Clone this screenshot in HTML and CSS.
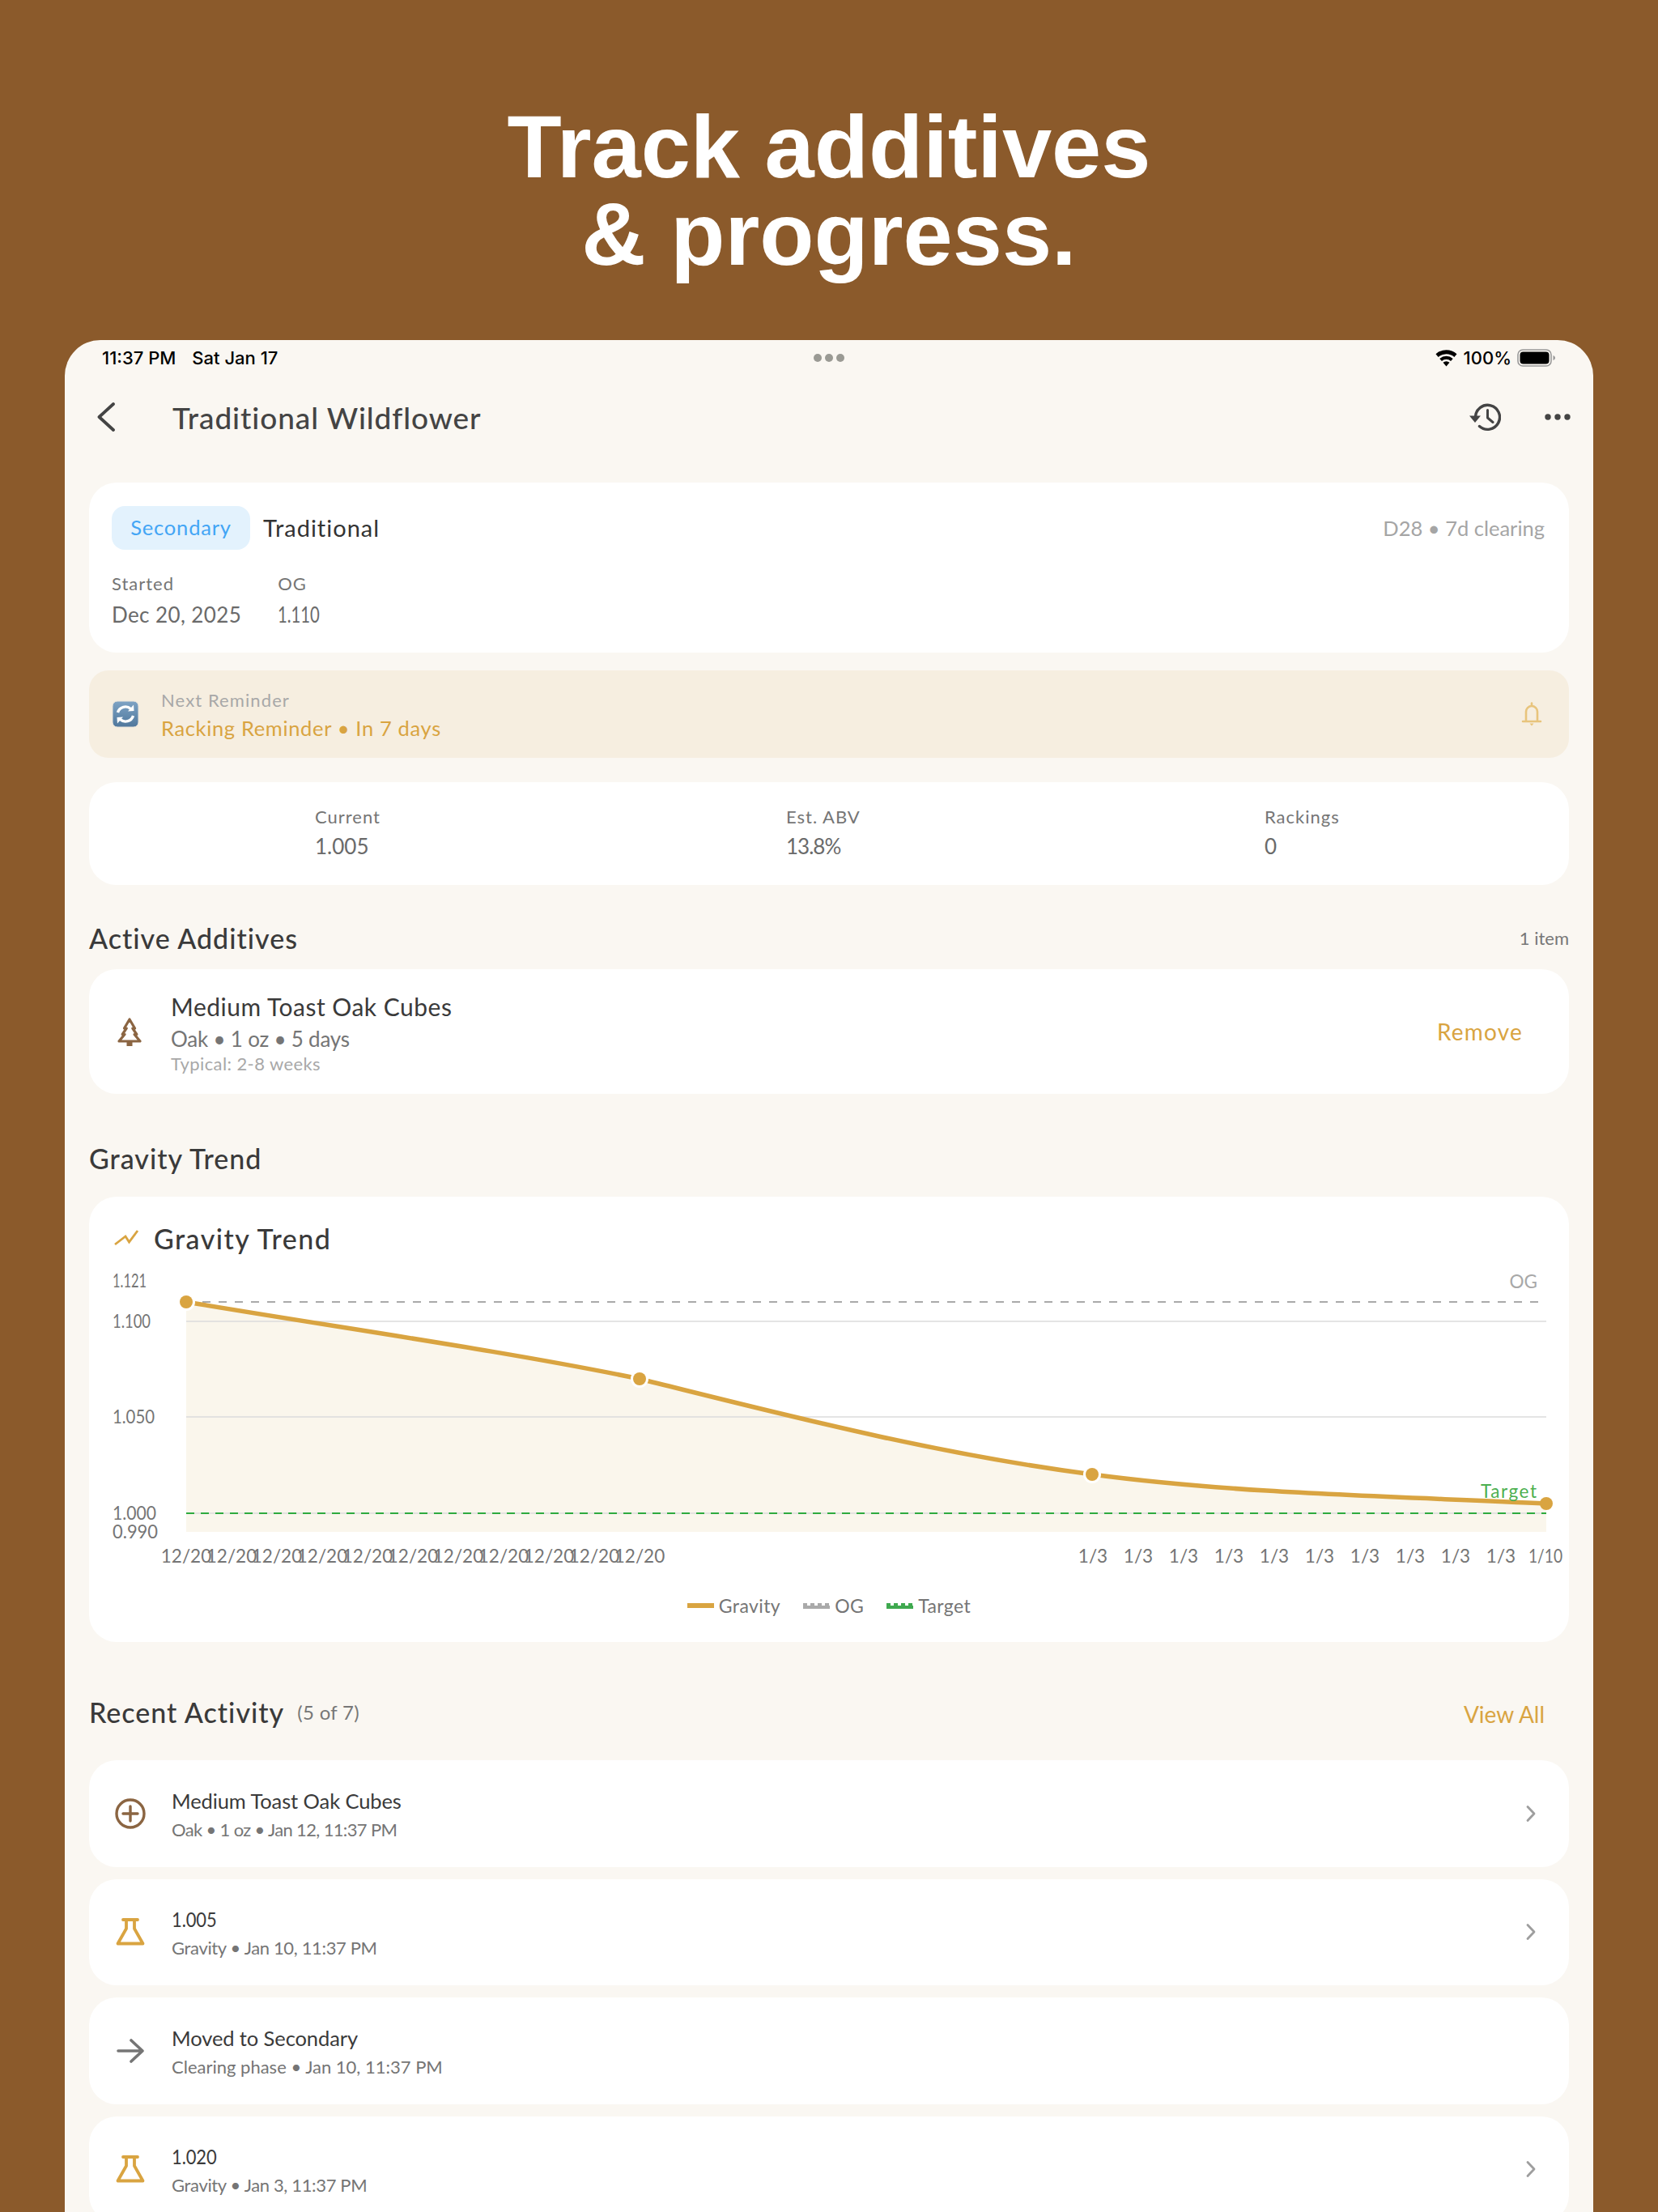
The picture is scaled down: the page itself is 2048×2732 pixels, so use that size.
FILE: index.html
```html
<!DOCTYPE html>
<html lang="en">
<head>
<meta charset="utf-8">
<title>Track additives &amp; progress</title>
<link rel="stylesheet" href="styles.css">
</head>
<body>
<h1 class="headline">Track additives<br>&amp; progress.</h1>
<main class="tablet">
  <div class="status">
    <div class="status-left"><span>11:37 PM</span><span>Sat Jan 17</span></div>
    <div class="status-dots"><i></i><i></i><i></i></div>
    <div class="status-right">
      <svg class="wifi" viewBox="0 0 26 20" width="29" height="21"><path d="M13 19.500l-3.800-4.400a5.600 5.600 0 0 1 7.600 0z"/><path d="M7.700 13.300l-2.500-2.900a11.800 11.800 0 0 1 15.600 0l-2.500 2.900a8 8 0 0 0-10.600 0z"/><path d="M3.600 8.500L.6 5a18.600 18.600 0 0 1 24.800 0l-3 3.500a14.200 14.200 0 0 0-18.800 0z"/></svg>
      <span>100%</span>
      <svg viewBox="0 0 48 22" width="48" height="22"><rect x="1" y="1" width="41" height="20" rx="6" fill="none" stroke="#999" stroke-width="1.600"/><rect x="3.500" y="3.500" width="36" height="15" rx="4" fill="#000"/><path d="M44.500 8v6c1.500-.6 2.500-1.700 2.500-3s-1-2.400-2.500-3z" fill="#999"/></svg>
    </div>
  </div>

  <header class="nav">
    <svg class="back" viewBox="0 0 24 36" width="24" height="36"><path d="M21 2L3.500 18 21 34" fill="none" stroke="#444" stroke-width="3.800" stroke-linecap="round" stroke-linejoin="round"/></svg>
    <div class="nav-title">Traditional Wildflower</div>
    <svg class="history" viewBox="0 0 40 36" width="40" height="36"><path d="M8.500 18a15 15 0 1 1 5 11.500" fill="none" stroke="#444" stroke-width="3.400" stroke-linecap="round"/><path d="M1 16.500h14l-7 8.500z" fill="#444"/><path d="M23.500 9.500V19l6.500 5.500" fill="none" stroke="#444" stroke-width="3" stroke-linecap="round" stroke-linejoin="round"/></svg>
    <svg class="more" viewBox="0 0 32 8" width="32" height="8"><circle cx="4" cy="4" r="3.700"/><circle cx="16" cy="4" r="3.700"/><circle cx="28" cy="4" r="3.700"/></svg>
  </header>

  <div class="content">
    <section class="card summary">
      <div class="summary-top">
        <span class="pill">Secondary</span>
        <span class="type">Traditional</span>
        <span class="age">D28 • 7d clearing</span>
      </div>
      <div class="facts">
        <div><div class="label">Started</div><div class="value date">Dec 20, 2025</div></div>
        <div><div class="label">OG</div><div class="value num-og">1.110</div></div>
      </div>
    </section>

    <section class="reminder">
      <svg class="emoji" viewBox="0 0 34 34" width="34" height="34">
        <defs><linearGradient id="blue" x1="0" y1="0" x2="0" y2="1"><stop offset="0" stop-color="#7ea3c4"/><stop offset="1" stop-color="#4f779c"/></linearGradient></defs>
        <rect x="1" y="1" width="32" height="32" rx="6" fill="url(#blue)" stroke="#e8e4dc"/>
        <path d="M7.500 15a9.800 9.800 0 0 1 16-4.500" fill="none" stroke="#fff" stroke-width="3.400"/>
        <path d="M20 13.500l7.500-.5-.5-7.500z" fill="#fff"/>
        <path d="M26.500 19a9.800 9.800 0 0 1-16 4.500" fill="none" stroke="#fff" stroke-width="3.400"/>
        <path d="M14 20.500l-7.500.5.500 7.500z" fill="#fff"/>
      </svg>
      <div class="reminder-text">
        <div class="reminder-label">Next Reminder</div>
        <div class="reminder-value">Racking Reminder • In 7 days</div>
      </div>
      <svg class="bell" viewBox="0 0 26 30" width="26" height="30"><path d="M13 1.500v3M6 23V12a7 7 0 0 1 14 0v11M2 24h22" fill="none" stroke="#e8c47c" stroke-width="2.600" stroke-linecap="round"/><path d="M10.500 26.500h5l-2.500 3z" fill="#e8c47c"/></svg>
    </section>

    <section class="card stats">
      <div><div class="label">Current</div><div class="value">1.005</div></div>
      <div><div class="label">Est. ABV</div><div class="value num-abv">13.8%</div></div>
      <div><div class="label">Rackings</div><div class="value">0</div></div>
    </section>

    <div class="section-head additives-head">
      <h2>Active Additives</h2>
      <span class="count">1 item</span>
    </div>
    <section class="card additive">
      <svg class="tree" viewBox="0 0 34 36" width="34" height="36"><path d="M17 3l6.500 11h-2.700l5 7.500h-2.800L30 30H4l7-8.500H8.200l5-7.500h-2.700z" fill="none" stroke="#8b6542" stroke-width="3.200" stroke-linejoin="round"/><rect x="13.500" y="29" width="7" height="7" fill="#8b6542"/></svg>
      <div class="additive-text">
        <div class="additive-name">Medium Toast Oak Cubes</div>
        <div class="additive-meta">Oak • 1 oz • 5 days</div>
        <div class="additive-note">Typical: 2-8 weeks</div>
      </div>
      <span class="remove">Remove</span>
    </section>

    <h2 class="trend-head">Gravity Trend</h2>
    <section class="card chart-card">
      <div class="chart-title">
        <svg viewBox="0 0 32 20" width="32" height="20"><path d="M2 18L15 8l4.500 7L30 1" fill="none" stroke="#d9a441" stroke-width="2.800"/></svg>
        <span>Gravity Trend</span>
      </div>
      <svg class="chart" viewBox="110 1560 1828 400" width="1828" height="400">
        <path class="area" d="M230 1608C420 1640 620 1668 790 1703C960 1745 1150 1795 1349 1821C1530 1845 1720 1848 1910 1857V1892H230Z"/>
        <path class="grid" d="M230 1632H1910M230 1750H1910M230 1869H1910"/>
        <path class="og" d="M230 1608H1910"/>
        <path class="tgt" d="M230 1869H1910"/>
        <path class="line" d="M230 1608C420 1640 620 1668 790 1703C960 1745 1150 1795 1349 1821C1530 1845 1720 1848 1910 1857"/>
        <circle class="halo" cx="230" cy="1608" r="11"/><circle class="halo" cx="790" cy="1703" r="11"/><circle class="halo" cx="1349" cy="1821" r="11"/>
        <circle class="pt" cx="230" cy="1608" r="8"/><circle class="pt" cx="790" cy="1703" r="8"/><circle class="pt" cx="1349" cy="1821" r="8"/><circle class="pt" cx="1910" cy="1857" r="8"/>
        <g class="ylab">
          <text x="139" y="1590" textLength="42" lengthAdjust="spacingAndGlyphs">1.121</text><text x="139" y="1640" textLength="47" lengthAdjust="spacingAndGlyphs">1.100</text><text x="139" y="1758" textLength="52" lengthAdjust="spacingAndGlyphs">1.050</text><text x="139" y="1877" textLength="54" lengthAdjust="spacingAndGlyphs">1.000</text><text x="139" y="1900" textLength="56" lengthAdjust="spacingAndGlyphs">0.990</text>
        </g>
        <text class="og-lab" x="1899" y="1591">OG</text>
        <text class="tgt-lab" x="1829" y="1850" textLength="69">Target</text>
        <g class="xlab">
          <text x="230" y="1930">12/20</text><text x="286" y="1930">12/20</text><text x="342" y="1930">12/20</text><text x="398" y="1930">12/20</text><text x="454" y="1930">12/20</text><text x="510" y="1930">12/20</text><text x="566" y="1930">12/20</text><text x="622" y="1930">12/20</text><text x="678" y="1930">12/20</text><text x="734" y="1930">12/20</text><text x="790" y="1930">12/20</text>
          <text x="1350" y="1930">1/3</text><text x="1406" y="1930">1/3</text><text x="1462" y="1930">1/3</text><text x="1518" y="1930">1/3</text><text x="1574" y="1930">1/3</text><text x="1630" y="1930">1/3</text><text x="1686" y="1930">1/3</text><text x="1742" y="1930">1/3</text><text x="1798" y="1930">1/3</text><text x="1854" y="1930">1/3</text>
        </g>
        <text class="xlab-last" x="1888" y="1930" textLength="42" lengthAdjust="spacingAndGlyphs">1/10</text>
      </svg>
      <div class="legend">
        <div class="legend-item"><i class="sw sw-g"></i>Gravity</div>
        <div class="legend-item"><i class="sw sw-o"></i>OG</div>
        <div class="legend-item"><i class="sw sw-t"></i>Target</div>
      </div>
    </section>

    <div class="section-head activity-head">
      <div class="activity-title"><h2>Recent Activity</h2><span class="count-lg">(5 of 7)</span></div>
      <span class="view-all">View All</span>
    </div>

    <div class="rows">
      <article class="row">
        <svg class="row-icon" viewBox="0 0 40 40" width="40" height="40"><circle cx="20" cy="20" r="17" fill="none" stroke="#8b6542" stroke-width="3.400"/><path d="M20 11v18M11 20h18" stroke="#8b6542" stroke-width="3.400" stroke-linecap="round"/></svg>
        <div class="row-text"><div class="row-title">Medium Toast Oak Cubes</div><div class="row-sub tight-lg">Oak • 1 oz • Jan 12, 11:37 PM</div></div>
        <svg class="chev" viewBox="0 0 14 24" width="14" height="24"><path d="M3 3.500l8 8.500-8 8.500" fill="none" stroke="#9e9e9e" stroke-width="2.800" stroke-linecap="round" stroke-linejoin="round"/></svg>
      </article>
      <article class="row">
        <svg class="row-icon" viewBox="0 0 40 40" width="40" height="40"><path d="M11 5h18M15 5v11L4.500 34.500h31L25 16V5" fill="none" stroke="#d9a441" stroke-width="3.800" stroke-linejoin="round" stroke-linecap="round"/></svg>
        <div class="row-text"><div class="row-title num-row">1.005</div><div class="row-sub tight-sm">Gravity • Jan 10, 11:37 PM</div></div>
        <svg class="chev" viewBox="0 0 14 24" width="14" height="24"><path d="M3 3.500l8 8.500-8 8.500" fill="none" stroke="#9e9e9e" stroke-width="2.800" stroke-linecap="round" stroke-linejoin="round"/></svg>
      </article>
      <article class="row">
        <svg class="row-icon" viewBox="0 0 40 40" width="40" height="40"><path d="M5 20h29M21 7l14 13-14 13" fill="none" stroke="#757575" stroke-width="3.600" stroke-linecap="round" stroke-linejoin="round"/></svg>
        <div class="row-text"><div class="row-title">Moved to Secondary</div><div class="row-sub">Clearing phase • Jan 10, 11:37 PM</div></div>
      </article>
      <article class="row">
        <svg class="row-icon" viewBox="0 0 40 40" width="40" height="40"><path d="M11 5h18M15 5v11L4.500 34.500h31L25 16V5" fill="none" stroke="#d9a441" stroke-width="3.800" stroke-linejoin="round" stroke-linecap="round"/></svg>
        <div class="row-text"><div class="row-title num-row">1.020</div><div class="row-sub tight-sm">Gravity • Jan 3, 11:37 PM</div></div>
        <svg class="chev" viewBox="0 0 14 24" width="14" height="24"><path d="M3 3.500l8 8.500-8 8.500" fill="none" stroke="#9e9e9e" stroke-width="2.800" stroke-linecap="round" stroke-linejoin="round"/></svg>
      </article>
    </div>
  </div>
</main>
</body>
</html>
```
FILE: styles.css
```css
* { box-sizing: border-box; }
html, body { margin: 0; padding: 0; }
body {
  width: 2048px; height: 2732px; overflow: hidden;
  background: #8b5a2b;
  font-family: "Lato", "Noto Sans", sans-serif;
  color: #333;
}
.headline {
  margin: 0; padding-top: 127px; height: 420px;
  font: 700 110px/108px "Liberation Sans", Arial, sans-serif;
  color: #fff; text-align: center;
}
.tablet {
  margin: 0 80px; height: 2312px; overflow: hidden;
  background: #faf7f2; border-radius: 44px 44px 0 0;
}
.status {
  height: 44px; padding: 0 46px; display: flex; align-items: center; justify-content: space-between;
  font: 500 22px/44px "Inter", sans-serif; color: #000;
}
.status-left { display: flex; gap: 20px; width: 360px; }
.status-dots { display: flex; gap: 4px; }
.status-dots i { width: 10px; height: 10px; border-radius: 50%; background: #9a9a94; }
.status-right { width: 360px; display: flex; gap: 7px; align-items: center; justify-content: flex-end; }
.nav { height: 104px; padding: 0 28px 2px 39px; display: flex; align-items: center; }
.nav-title { margin-left: 70px; flex: 1; font-size: 37px; font-weight: 500; color: #444; letter-spacing: .9px; }
.more { fill: #444; margin-left: 54px; }
.content { padding: 28px 30px 0; }
.card { background: #fff; border-radius: 34px; }
.summary { height: 210px; padding: 29px 30px 0 28px; }
.summary-top { display: flex; align-items: center; height: 54px; }
.pill {
  width: 171px; height: 54px; padding-bottom: 2px; border-radius: 16px; background: #e3f2fd; color: #42a5f5;
  display: flex; align-items: center; justify-content: center; font-size: 25.500px; letter-spacing: .8px;
}
.type { margin: 0 0 2px 16px; font-size: 29px; color: #333; letter-spacing: 1px; }
.age { margin: 0 0 1px auto; font-size: 25.500px; color: #a5a5a5; }
.facts { display: flex; gap: 45px; margin-top: 28px; }
.label { font-size: 22px; line-height: 28px; color: #757575; letter-spacing: 1px; }
.value { font-size: 26px; line-height: 32px; margin-top: 8px; color: #6a6a6a; }
.date { letter-spacing: .4px; }
.num-og { transform: scaleX(.78); transform-origin: left center; }
.num-abv { letter-spacing: -1px; }
.reminder {
  margin-top: 22px; height: 108px; border-radius: 24px; background: #f6eee0;
  display: flex; align-items: center; padding: 0 33px 0 28px;
}
.reminder-text { margin-left: 27px; flex: 1; }
.reminder-label { font-size: 22px; line-height: 30px; color: #a8a8a8; letter-spacing: 1.100px; }
.reminder-value { font-size: 25.500px; line-height: 32px; margin-top: 3px; color: #d9a441; letter-spacing: .65px; }
.stats {
  margin-top: 30px; height: 127px; padding: 29px 0 0 279px;
  display: grid; grid-template-columns: 582px 591px 1fr;
}
.stats .value { margin-top: 6px; }
.section-head { display: flex; align-items: center; justify-content: space-between; }
h2 { margin: 0; font-size: 34px; font-weight: 500; color: #3a3a3a; letter-spacing: 1px; }
.additives-head { margin-top: 45px; height: 40px; }
.count { font-size: 22px; color: #777; }
.count-lg { font-size: 24px; color: #777; letter-spacing: .3px; }
.additive { margin-top: 19px; height: 154px; display: flex; align-items: center; padding: 0 57px 0 33px; }
.additive-text { margin-left: 34px; flex: 1; }
.additive-name { font-size: 30px; line-height: 38px; color: #3a3a3a; letter-spacing: .5px; }
.additive-meta { font-size: 26px; line-height: 42px; color: #757575; letter-spacing: -.2px; }
.additive-note { font-size: 22px; line-height: 20px; color: #a8a8a8; letter-spacing: .4px; }
.remove { font-size: 28px; color: #d9a441; letter-spacing: 1.200px; }
.trend-head { margin-top: 58px; line-height: 44px; }
.chart-card { margin-top: 25px; height: 550px; padding-top: 29px; }
.chart-title {
  display: flex; align-items: center; gap: 18px; margin-left: 30px; height: 44px;
  font-size: 34px; font-weight: 500; color: #3a3a3a; letter-spacing: 1.450px;
}
.chart { display: block; margin-top: 9px; overflow: visible; }
.area { fill: #faf6ec; }
.grid { stroke: #dcdcdc; stroke-width: 1.500; fill: none; }
.og { stroke: #aaa; stroke-width: 2; stroke-dasharray: 10 10; fill: none; }
.tgt { stroke: #2eaa3f; stroke-width: 2; stroke-dasharray: 10 8; fill: none; }
.line { stroke: #d9a441; stroke-width: 5.500; fill: none; }
.halo { fill: #fff; }
.pt { fill: #d9a441; }
.chart text { font-family: "Lato", sans-serif; font-size: 22.500px; fill: #757575; }
.xlab text { text-anchor: middle; }
.og-lab { text-anchor: end; fill: #a8a8a8 !important; }
.tgt-lab { fill: #4caf50 !important; }
.legend {
  display: flex; justify-content: center; gap: 28px; margin-top: 9px;
  font-size: 23px; color: #757575; letter-spacing: .4px;
}
.legend-item { display: flex; align-items: center; gap: 6px; }
.sw { display: block; width: 33px; height: 7px; }
.sw-g { background: #d9a441; height: 6px; }
.sw-o {
  background: linear-gradient(#aaa, #aaa) bottom / 100% 4px no-repeat,
    repeating-linear-gradient(90deg, #aaa 0 5px, transparent 5px 9px);
}
.sw-t {
  background: linear-gradient(#3fa94f, #3fa94f) bottom / 100% 4px no-repeat,
    repeating-linear-gradient(90deg, #3fa94f 0 5px, transparent 5px 9px);
}
.activity-head { margin-top: 62px; height: 48px; padding-right: 30px; }
.activity-title { display: flex; align-items: center; gap: 16px; }
.view-all { font-size: 28px; color: #d9a441; margin-top: 5px; }
.rows { display: flex; flex-direction: column; gap: 15px; margin-top: 36px; }
.row {
  height: 131.500px; background: #fff; border-radius: 34px;
  display: flex; align-items: center; padding: 0 40px 0 31px;
}
.row-text { margin-left: 31px; flex: 1; padding-top: 4px; }
.row-title { font-size: 25.500px; line-height: 34px; color: #3a3a3a; letter-spacing: -.1px; }
.row-sub { font-size: 22px; line-height: 34px; margin-top: 2px; color: #757575; }
.tight-sm { letter-spacing: -.35px; }
.tight-lg { letter-spacing: -.65px; }
.num-row { transform: scaleX(.86); transform-origin: left center; }
```
